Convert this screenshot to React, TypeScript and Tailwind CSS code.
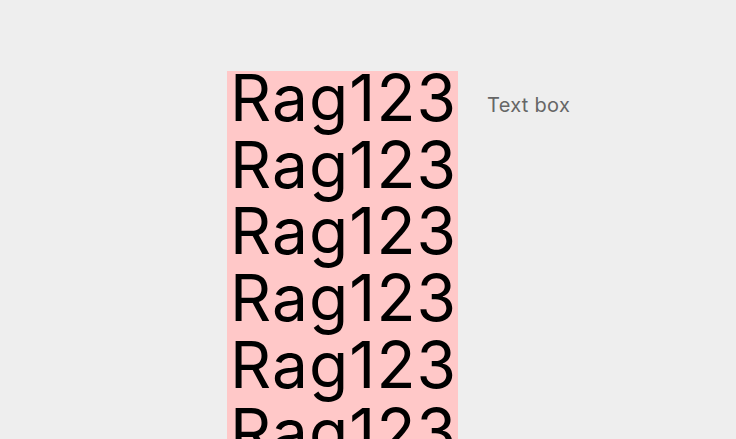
export default function App() {
  const lines = Array.from({ length: 6 });
  return (
    <div className="h-[439px] w-[736px] overflow-hidden bg-[#eeeeee] font-['Inter',sans-serif]">
      <div className="flex pl-[227px] pt-[71px]">
        <div className="h-[368px] w-[231px] overflow-hidden bg-[#ffc8c8]">
          <div className="-mt-[6px] pl-[3px] text-[64px] leading-[66.7px] tracking-[1.1px] text-black">
            {lines.map((_, i) => (
              <div key={i} className="whitespace-nowrap">Rag123</div>
            ))}
          </div>
        </div>
        <div className="pl-[29px] pt-[21px] text-[20px] leading-[26px] tracking-[0.3px] text-[#666666]">Text box</div>
      </div>
    </div>
  );
}
